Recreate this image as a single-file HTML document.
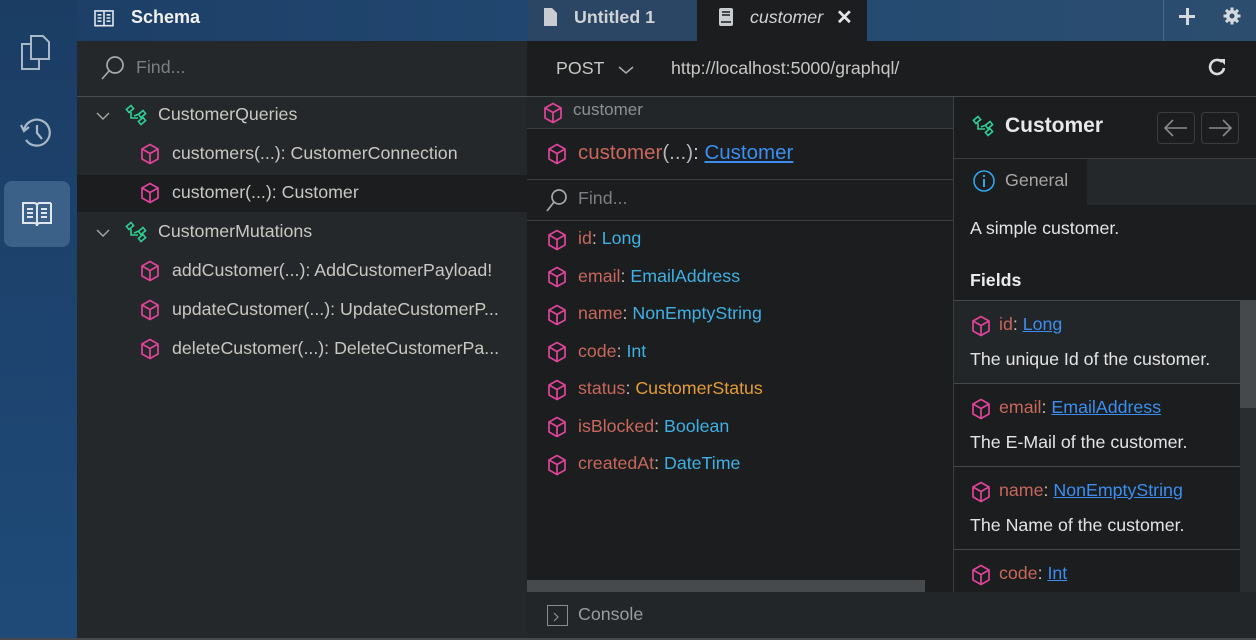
<!DOCTYPE html>
<html><head><meta charset="utf-8"><style>
*{box-sizing:border-box;margin:0;padding:0}
body{width:1256px;height:640px;overflow:hidden;font-family:"Liberation Sans",sans-serif;background:#1b1d1f;position:relative;color:#c9c7c3;font-size:17.8px}
.abs{position:absolute}
.cube{width:20px;height:22px}
.t{white-space:nowrap}
.fn{color:#c8675b}.ty{color:#3fb0e3}.or{color:#e59b36}.ln{color:#3b8ef0;text-decoration:underline}
</style></head><body>
<svg width="0" height="0" style="position:absolute"><defs>
<symbol id="cube" viewBox="0 0 20 22"><path d="M10 1.5 L18 6 V16 L10 20.5 L2 16 V6 Z M2 6 L10 10.5 L18 6 M10 10.5 V20.5" fill="none" stroke="#e0449a" stroke-width="1.7" stroke-linejoin="round"/></symbol>
<symbol id="grp" viewBox="0 0 24 22"><g fill="none" stroke="#2fcf94" stroke-width="1.6"><rect x="2" y="3" width="6" height="4" transform="rotate(-40 5 5)"/><rect x="14" y="8" width="6" height="4" transform="rotate(-40 17 10)"/><rect x="14" y="15" width="6" height="4" transform="rotate(-40 17 17)"/><path d="M6 8 V14 H13 M9 12 L14 10"/></g></symbol>
</defs></svg>

<div class="abs" style="left:0;top:0;width:1256px;height:41px;background:linear-gradient(90deg,#1c3e66,#234a73 60%,#2c4d6e)"></div>
<div class="abs" style="left:0;top:0;width:77px;height:640px;background:linear-gradient(180deg,#1b3d64,#1f4a78)"></div>
<div class="abs" style="left:4px;top:181px;width:66px;height:66px;border-radius:8px;background:#3b6189"></div>
<svg class="abs" style="left:19px;top:33px" width="34" height="38" viewBox="0 0 34 38"><g fill="none" stroke="#aab7c6" stroke-width="2"><path d="M12 3 H24 L30 9 V26 H12 Z"/><path d="M12 11 H3 V36 H20 V26"/></g></svg>
<svg class="abs" style="left:20px;top:116px" width="34" height="34" viewBox="0 0 34 34"><g fill="none" stroke="#aab7c6" stroke-width="2.2"><path d="M4 14 A13 13 0 1 1 6 24"/><path d="M1 9 L4 15 L9 11"/><path d="M17 9 V17 L22 23"/></g></svg>
<svg class="abs" style="left:21px;top:200px" width="32" height="28" viewBox="0 0 32 28"><g fill="none" stroke="#dfe6ee" stroke-width="2"><path d="M2 3 H13 Q16 3 16 6 V26 Q16 23 13 23 H2 Z M30 3 H19 Q16 3 16 6 M16 26 Q16 23 19 23 H30 V3"/><path d="M6 9 H12 M6 13 H12 M6 17 H12 M20 9 H26 M20 13 H26 M20 17 H26"/></g></svg>
<svg class="abs" style="left:93px;top:9px" width="22" height="18" viewBox="0 0 32 28"><g fill="none" stroke="#dfe6ee" stroke-width="2.5"><path d="M2 3 H16 V26 H2 Z M16 3 H30 V26 H16"/><path d="M6 9 H12 M6 14 H12 M6 19 H12 M20 9 H26 M20 14 H26 M20 19 H26"/></g></svg>
<div class="abs t" style="left:131px;top:7px;font-weight:bold;color:#f0f0f0;font-size:18px">Schema</div>

<div class="abs" style="left:77px;top:41px;width:450px;height:599px;background:#25282a"></div>
<div class="abs" style="left:77px;top:96px;width:450px;height:1px;background:#4a4e51"></div>
<svg class="abs" style="left:100px;top:55px" width="26" height="26" viewBox="0 0 26 26"><g fill="none" stroke="#a9a9a9" stroke-width="1.7"><circle cx="15" cy="10" r="8"/><path d="M9 16 L2 24"/></g></svg>
<div class="abs t" style="left:136px;top:57px;color:#7c7f82">Find...</div>
<div class="abs" style="left:77px;top:175px;width:450px;height:37px;background:#1b1d1f"></div>
<svg class="abs" style="left:95px;top:111px" width="16" height="10"><path d="M2 2 L8 8 L14 2" fill="none" stroke="#aaa" stroke-width="1.4"/></svg>
<svg class="abs" style="left:125px;top:104px" width="24" height="22"><use href="#grp"/></svg>
<div class="abs t" style="left:158px;top:104px">CustomerQueries</div>
<svg class="abs cube" style="left:140px;top:143px"><use href="#cube"/></svg>
<div class="abs t" style="left:172px;top:143px">customers(...): CustomerConnection</div>
<svg class="abs cube" style="left:140px;top:182px"><use href="#cube"/></svg>
<div class="abs t" style="left:172px;top:182px">customer(...): Customer</div>
<svg class="abs" style="left:95px;top:228px" width="16" height="10"><path d="M2 2 L8 8 L14 2" fill="none" stroke="#aaa" stroke-width="1.4"/></svg>
<svg class="abs" style="left:125px;top:221px" width="24" height="22"><use href="#grp"/></svg>
<div class="abs t" style="left:158px;top:221px">CustomerMutations</div>
<svg class="abs cube" style="left:140px;top:260px"><use href="#cube"/></svg>
<div class="abs t" style="left:172px;top:260px">addCustomer(...): AddCustomerPayload!</div>
<svg class="abs cube" style="left:140px;top:299px"><use href="#cube"/></svg>
<div class="abs t" style="left:172px;top:299px">updateCustomer(...): UpdateCustomerP...</div>
<svg class="abs cube" style="left:140px;top:338px"><use href="#cube"/></svg>
<div class="abs t" style="left:172px;top:338px">deleteCustomer(...): DeleteCustomerPa...</div>

<div class="abs" style="left:527px;top:0;width:170px;height:41px;background:#2b4565"></div>
<svg class="abs" style="left:543px;top:7px" width="15" height="20" viewBox="0 0 15 20"><path d="M1 1 H9 L14 6 V19 H1 Z" fill="#c9ccd0"/></svg>
<div class="abs t" style="left:574px;top:7px;font-weight:bold;color:#d0d3d6">Untitled 1</div>
<div class="abs" style="left:697px;top:0;width:170px;height:41px;background:#1b1d1f"></div>
<svg class="abs" style="left:718px;top:7px" width="16" height="20" viewBox="0 0 16 20"><rect x="1" y="1" width="14" height="18" rx="2" fill="#c9ccd0"/><path d="M4 5 H12 M4 8 H12 M3 15 H13" stroke="#1b1d1f" stroke-width="1.5"/></svg>
<div class="abs t" style="left:750px;top:7px;font-style:italic;color:#d0d3d6">customer</div>
<div class="abs t" style="left:836px;top:5px;font-weight:bold;color:#e6e6e6;font-size:20px">✕</div>
<div class="abs" style="left:1163px;top:0;width:1px;height:41px;background:#4b6a8e"></div>
<div class="abs" style="left:1179px;top:15px;width:16px;height:3px;background:#d6d9dd"></div>
<div class="abs" style="left:1185.5px;top:8px;width:3px;height:17px;background:#d6d9dd"></div>
<svg class="abs" style="left:1223px;top:7px" width="18" height="18" viewBox="0 0 18 18"><g fill="#d6d9dd"><circle cx="9" cy="9" r="6"/><rect x="7.5" y="0.5" width="3" height="17"/><rect x="0.5" y="7.5" width="17" height="3"/><rect x="7.5" y="0.5" width="3" height="17" transform="rotate(45 9 9)"/><rect x="7.5" y="0.5" width="3" height="17" transform="rotate(-45 9 9)"/></g><circle cx="9" cy="9" r="2.5" fill="#2c4d6e"/></svg>

<div class="abs t" style="left:556px;top:58px;color:#c9c7c3">POST</div>
<svg class="abs" style="left:617px;top:64px" width="18" height="12"><path d="M2 3 L9 9 L16 3" fill="none" stroke="#aaa" stroke-width="1.5"/></svg>
<div class="abs t" style="left:671px;top:58px;color:#c9c7c3">http://localhost:5000/graphql/</div>
<svg class="abs" style="left:1207px;top:57px" width="20" height="20" viewBox="0 0 20 20"><path d="M15 5 A7 7 0 1 0 17 11" fill="none" stroke="#dcdcdc" stroke-width="2.6"/><path d="M12 2 L18 2 L18 8 Z" fill="#dcdcdc"/></svg>
<div class="abs" style="left:527px;top:96px;width:729px;height:1px;background:#45494c"></div>

<div class="abs" style="left:527px;top:97px;width:426px;height:32px;background:#232628"></div>
<div class="abs" style="left:527px;top:128px;width:426px;height:1px;background:#3a3e41"></div>
<svg class="abs cube" style="left:543px;top:102px"><use href="#cube"/></svg>
<div class="abs t" style="left:573px;top:100px;color:#8c8f92;font-size:17px">customer</div>
<svg class="abs cube" style="left:547px;top:143px"><use href="#cube"/></svg>
<div class="abs t" style="left:578px;top:141px;font-size:20.5px"><span class="fn">customer</span><span style="color:#b9b6b2">(...)</span>: <span class="ln">Customer</span></div>
<div class="abs" style="left:527px;top:179px;width:426px;height:1px;background:#3a3e41"></div>
<svg class="abs" style="left:543px;top:187px" width="26" height="26" viewBox="0 0 26 26"><g fill="none" stroke="#a9a9a9" stroke-width="1.7"><circle cx="16" cy="10" r="7"/><path d="M11 15 L4 24"/></g></svg>
<div class="abs t" style="left:578px;top:188px;color:#7c7f82">Find...</div>
<div class="abs" style="left:527px;top:220px;width:426px;height:1px;background:#3a3e41"></div>
<svg class="abs cube" style="left:547px;top:229px"><use href="#cube"/></svg><div class="abs t" style="left:578px;top:228px"><span class="fn">id</span>: <span class="ty">Long</span></div>
<svg class="abs cube" style="left:547px;top:266px"><use href="#cube"/></svg><div class="abs t" style="left:578px;top:266px"><span class="fn">email</span>: <span class="ty">EmailAddress</span></div>
<svg class="abs cube" style="left:547px;top:304px"><use href="#cube"/></svg><div class="abs t" style="left:578px;top:303px"><span class="fn">name</span>: <span class="ty">NonEmptyString</span></div>
<svg class="abs cube" style="left:547px;top:341px"><use href="#cube"/></svg><div class="abs t" style="left:578px;top:341px"><span class="fn">code</span>: <span class="ty">Int</span></div>
<svg class="abs cube" style="left:547px;top:379px"><use href="#cube"/></svg><div class="abs t" style="left:578px;top:378px"><span class="fn">status</span>: <span class="or">CustomerStatus</span></div>
<svg class="abs cube" style="left:547px;top:416px"><use href="#cube"/></svg><div class="abs t" style="left:578px;top:416px"><span class="fn">isBlocked</span>: <span class="ty">Boolean</span></div>
<svg class="abs cube" style="left:547px;top:454px"><use href="#cube"/></svg><div class="abs t" style="left:578px;top:453px"><span class="fn">createdAt</span>: <span class="ty">DateTime</span></div>
<div class="abs" style="left:527px;top:580px;width:398px;height:12px;background:#464a4d"></div>

<div class="abs" style="left:953px;top:97px;width:1px;height:495px;background:#3a3e41"></div>
<svg class="abs" style="left:972px;top:115px" width="24" height="22"><use href="#grp"/></svg>
<div class="abs t" style="left:1005px;top:114px;font-weight:bold;font-size:21px;color:#e8e8e8">Customer</div>
<div class="abs" style="left:1157px;top:112px;width:38px;height:32px;border:1px solid #3a3d40;border-radius:4px"></div>
<div class="abs" style="left:1201px;top:112px;width:38px;height:32px;border:1px solid #3a3d40;border-radius:4px"></div>
<svg class="abs" style="left:1163px;top:118px" width="26" height="20"><path d="M2 10 H24 M10 2 L2 10 L10 18" fill="none" stroke="#8a8a8a" stroke-width="1.6"/></svg>
<svg class="abs" style="left:1207px;top:118px" width="26" height="20"><path d="M2 10 H24 M16 2 L24 10 L16 18" fill="none" stroke="#8a8a8a" stroke-width="1.6"/></svg>
<div class="abs" style="left:954px;top:158px;width:302px;height:1px;background:#3a3e41"></div>
<div class="abs" style="left:1087px;top:159px;width:169px;height:46px;background:#25282a"></div>
<svg class="abs" style="left:972px;top:169px" width="24" height="24"><circle cx="12" cy="12" r="10" fill="none" stroke="#2ea8e8" stroke-width="1.6"/><rect x="11" y="10" width="2" height="8" fill="#2ea8e8"/><rect x="11" y="6" width="2" height="2" fill="#2ea8e8"/></svg>
<div class="abs t" style="left:1005px;top:170px;color:#a9a6a2">General</div>
<div class="abs t" style="left:970px;top:218px;color:#e4e4e4">A simple customer.</div>
<div class="abs t" style="left:970px;top:270px;color:#ebebeb;font-weight:bold">Fields</div>
<div class="abs" style="left:954px;top:300px;width:286px;height:292px;background:#1b1d1f"></div>
<div class="abs" style="left:954px;top:300px;width:286px;height:83px;background:#232628;border-top:1px solid #45494c"></div>
<div class="abs" style="left:954px;top:383px;width:286px;height:1px;background:#45494c"></div>
<div class="abs" style="left:954px;top:466px;width:286px;height:1px;background:#45494c"></div>
<div class="abs" style="left:954px;top:549px;width:286px;height:1px;background:#45494c"></div>
<div class="abs" style="left:1240px;top:300px;width:16px;height:292px;background:#2a2d30"></div>
<div class="abs" style="left:1240px;top:300px;width:16px;height:108px;background:#45494c"></div>
<svg class="abs cube" style="left:971px;top:315px"><use href="#cube"/></svg><div class="abs t" style="left:999px;top:314px"><span class="fn">id</span>: <span class="ln">Long</span></div>
<div class="abs t" style="left:970px;top:349px;color:#e4e4e4">The unique Id of the customer.</div>
<svg class="abs cube" style="left:971px;top:398px"><use href="#cube"/></svg><div class="abs t" style="left:999px;top:397px"><span class="fn">email</span>: <span class="ln">EmailAddress</span></div>
<div class="abs t" style="left:970px;top:432px;color:#e4e4e4">The E-Mail of the customer.</div>
<svg class="abs cube" style="left:971px;top:481px"><use href="#cube"/></svg><div class="abs t" style="left:999px;top:480px"><span class="fn">name</span>: <span class="ln">NonEmptyString</span></div>
<div class="abs t" style="left:970px;top:515px;color:#e4e4e4">The Name of the customer.</div>
<svg class="abs cube" style="left:971px;top:564px"><use href="#cube"/></svg><div class="abs t" style="left:999px;top:563px"><span class="fn">code</span>: <span class="ln">Int</span></div>

<div class="abs" style="left:527px;top:592px;width:729px;height:46px;background:#232628"></div>
<div class="abs" style="left:0;top:638px;width:1256px;height:2px;background:#45494c"></div>
<div class="abs" style="left:547px;top:605px;width:21px;height:21px;border:1.5px solid #8a8d90"></div>
<svg class="abs" style="left:551px;top:609px" width="12" height="14"><path d="M3 4 L7 8 L3 12" fill="none" stroke="#8a8d90" stroke-width="1.2"/></svg>
<div class="abs t" style="left:578px;top:604px;color:#9a9c9e">Console</div>
</body></html>
